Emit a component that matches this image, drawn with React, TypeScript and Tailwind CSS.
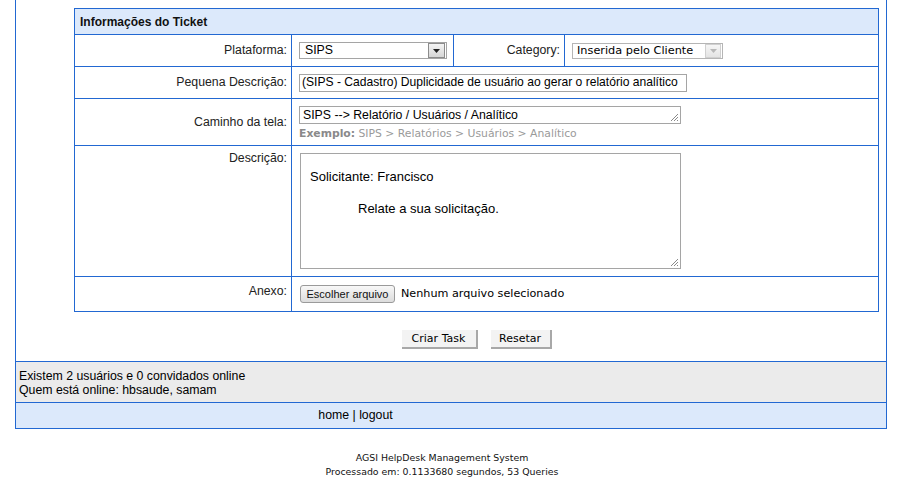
import React from 'react';

const BLUE = 'border-[#2268d2]';

const Grip = () => (
  <svg width="9" height="9" viewBox="0 0 9 9" className="absolute right-[1px] bottom-[1px]">
    <line x1="8" y1="1" x2="1" y2="8" stroke="#8a8a8a" strokeWidth="1" />
    <line x1="8" y1="4" x2="4" y2="8" stroke="#8a8a8a" strokeWidth="1" />
    <line x1="8" y1="7" x2="7" y2="8" stroke="#8a8a8a" strokeWidth="1" />
  </svg>
);

const Arrow = ({ disabled }: { disabled?: boolean }) => (
  <div
    className={
      disabled
        ? 'flex h-full w-[16px] items-center justify-center border border-[#d0d0d0] bg-gradient-to-b from-[#f6f6f6] to-[#e4e4e4]'
        : 'flex h-full w-[17px] items-center justify-center border border-[#8c8c8c] bg-gradient-to-b from-[#f4f4f4] to-[#d6d6d6]'
    }
  >
    <svg width="7" height="4" viewBox="0 0 7 4">
      <polygon points="0,0 7,0 3.5,4" fill={disabled ? '#b8b8b8' : '#222'} />
    </svg>
  </div>
);

export default function App() {
  return (
    <div className="min-h-[488px] bg-white font-['Liberation_Sans',Arial,sans-serif] text-[12.3px] text-black">
      <div className={`ml-[15px] w-[872px] border-x border-b ${BLUE}`}>
        <div className="pl-[58px] pt-[8px]">
          {/* tabela do ticket */}
          <div className={`w-[805px] border ${BLUE}`}>
            <div className={`flex h-[26px] items-center border-b ${BLUE} bg-[#dce9fb] pl-[5px] text-[12px] font-bold text-[#111]`}>
              Informações do Ticket
            </div>

            {/* Plataforma / Category */}
            <div className={`flex h-[32px] border-b ${BLUE}`}>
              <div className={`flex w-[217px] items-center justify-end border-r ${BLUE} pr-[4px] text-[#222]`}>Plataforma:</div>
              <div className={`flex w-[162px] items-center border-r ${BLUE} pl-[7px]`}>
                <div className="flex h-[17px] w-[148px] items-center border border-[#a5a5a5] bg-white pr-[1px]">
                  <span className="flex-1 pl-[5px] leading-none">SIPS</span>
                  <div className="h-[15px]">
                    <Arrow />
                  </div>
                </div>
              </div>
              <div className={`flex w-[111px] items-center justify-end border-r ${BLUE} pr-[4px] text-[#222]`}>Category:</div>
              <div className="flex flex-1 items-center pl-[7px]">
                <div className="flex h-[16px] w-[151px] items-center border border-[#b5b5b5] bg-white pr-[1px]">
                  <span className="flex-1 pl-[4px] font-['DejaVu_Sans',Verdana,sans-serif] text-[11.3px] leading-none">Inserida pelo Cliente</span>
                  <div className="h-[14px]">
                    <Arrow disabled />
                  </div>
                </div>
              </div>
            </div>

            {/* Pequena Descrição */}
            <div className={`flex h-[32px] border-b ${BLUE}`}>
              <div className={`flex w-[217px] items-center justify-end border-r ${BLUE} pr-[4px] text-[#222]`}>Pequena Descrição:</div>
              <div className="flex flex-1 items-center pl-[7px]">
                <div className="flex h-[18px] w-[388px] items-center whitespace-nowrap border border-[#a5a5a5] pl-[2px] text-[12.1px] leading-none">
                  (SIPS - Cadastro) Duplicidade de usuário ao gerar o relatório analítico
                </div>
              </div>
            </div>

            {/* Caminho da tela */}
            <div className={`flex h-[47px] border-b ${BLUE}`}>
              <div className={`flex w-[217px] items-center justify-end border-r ${BLUE} pr-[4px] text-[#222]`}>Caminho da tela:</div>
              <div className="flex-1 pl-[7px] pt-[7px]">
                <div className="relative flex h-[18px] w-[382px] items-center border border-[#a5a5a5] pl-[3px] leading-none">
                  SIPS --&gt; Relatório / Usuários / Analítico
                  <Grip />
                </div>
                <div className="mt-[3px] font-['DejaVu_Sans',Verdana,sans-serif] text-[10.8px] leading-[14px] text-[#9a9a9a]">
                  <b className="text-[#8a8a8a]">Exemplo:</b> SIPS &gt; Relatórios &gt; Usuários &gt; Analítico
                </div>
              </div>
            </div>

            {/* Descrição */}
            <div className={`flex h-[131px] border-b ${BLUE}`}>
              <div className={`w-[217px] border-r ${BLUE} pr-[4px] pt-[5px] text-right leading-[14px] text-[#222]`}>Descrição:</div>
              <div className="flex-1 pl-[8px] pt-[7px]">
                <div className="relative h-[116px] w-[381px] border border-[#a5a5a5] pl-[9px] pt-[15px] text-[13px] leading-[16px]">
                  <div>Solicitante: Francisco</div>
                  <div className="mt-[16px] pl-[48px]">Relate a sua solicitação.</div>
                  <Grip />
                </div>
              </div>
            </div>

            {/* Anexo */}
            <div className="flex h-[34px]">
              <div className={`w-[217px] border-r ${BLUE} pr-[4px] pt-[7px] text-right leading-[14px] text-[#222]`}>Anexo:</div>
              <div className="flex flex-1 items-start gap-[6px] pl-[8px] pt-[8px]">
                <button className="h-[18px] w-[95px] rounded-[3px] border border-[#9a9a9a] bg-gradient-to-b from-[#f8f8f8] to-[#dcdcdc] text-[11px] leading-none text-[#111]">
                  Escolher arquivo
                </button>
                <span className="font-['DejaVu_Sans',Verdana,sans-serif] text-[11.2px] leading-[18px]">Nenhum arquivo selecionado</span>
              </div>
            </div>
          </div>

          {/* botões */}
          <div className="flex h-[49px] w-[805px] justify-center gap-[13px] pt-[18px]">
            <button className="h-[19px] w-[76px] border-b-2 border-r-2 border-b-[#a8a8a8] border-r-[#a8a8a8] bg-[#f3f3f3] font-['DejaVu_Sans',Verdana,sans-serif] text-[11px] leading-none">
              Criar Task
            </button>
            <button className="h-[19px] w-[61px] border-b-2 border-r-2 border-b-[#a8a8a8] border-r-[#a8a8a8] bg-[#f3f3f3] font-['DejaVu_Sans',Verdana,sans-serif] text-[11px] leading-none">
              Resetar
            </button>
          </div>
        </div>

        {/* quem está online */}
        <div className={`h-[41px] border-t ${BLUE} bg-[#ebebeb] pl-[3px] pt-[7px] leading-[14px]`}>
          <div>Existem 2 usuários e 0 convidados online</div>
          <div>Quem está online: hbsaude, samam</div>
        </div>

        <div className={`flex h-[26px] items-center border-t ${BLUE} bg-[#dce9fb]`}>
          <div className="w-[679px] text-center">home | logout</div>
        </div>
      </div>

      <div className="mt-[22px] w-[884px] text-center font-['DejaVu_Sans',Verdana,sans-serif] text-[9.4px] leading-[14px] text-[#111]">
        <div>AGSI HelpDesk Management System</div>
        <div>Processado em: 0.1133680 segundos, 53 Queries</div>
      </div>
    </div>
  );
}
